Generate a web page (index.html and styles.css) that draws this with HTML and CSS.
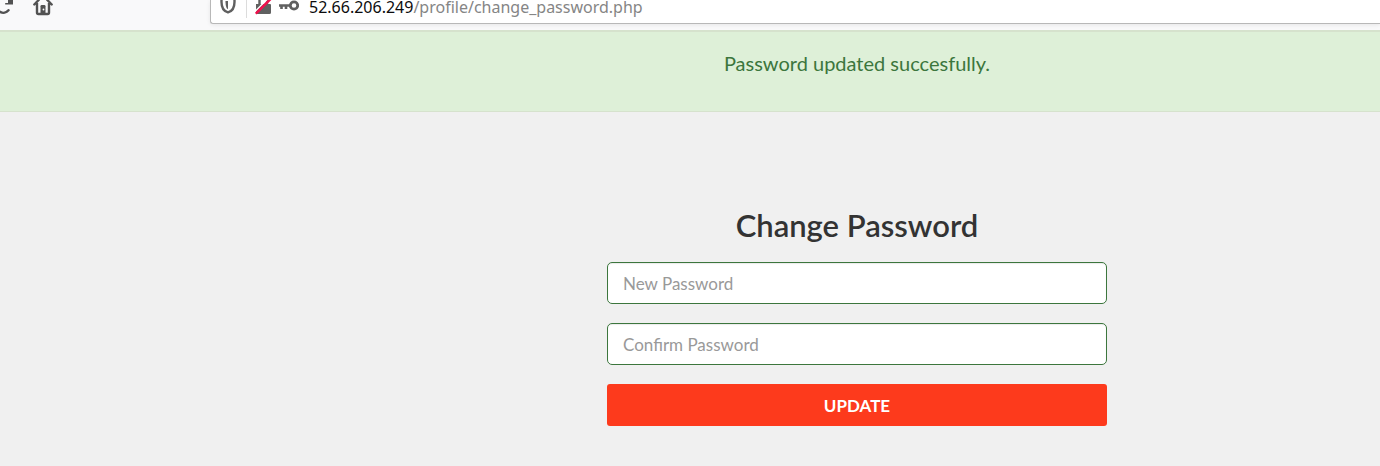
FILE: index.html
```html
<!DOCTYPE html>
<html lang="en">
<head>
<meta charset="utf-8">
<title>Change Password</title>
<link rel="stylesheet" href="styles.css">
</head>
<body>
<header class="toolbar">
  <nav class="nav-buttons">
    <button class="icon-button" type="button" aria-label="Reload">
      <svg width="14" height="16" viewBox="0 0 14 16"><path d="M0 11.8C3 13.4 6.500 12.800 8.500 10.300" fill="none" stroke="#525252" stroke-width="2.4" stroke-linecap="round"/><path d="M13 0V4.6H5.2V3H8V0Z" fill="#525252"/></svg>
    </button>
    <button class="icon-button" type="button" aria-label="Home">
      <svg width="20" height="16" viewBox="0 0 20 16"><path d="M1.3 4.5L5.7 0M18.7 4.5L14.3 0M4 3V12.6Q4 14 5.4 14H14.6Q16 14 16 12.6V3" fill="none" stroke="#525252" stroke-width="2.4" stroke-linecap="round" stroke-linejoin="round"/><path d="M7.500 14V6.200Q7.500 5 8.700 5H11.300Q12.500 5 12.500 6.200V14Z" fill="#525252"/><circle cx="10.500" cy="9.500" r=".9" fill="#f9f9fa"/></svg>
    </button>
  </nav>
  <div class="address-bar">
    <svg class="shield" width="16" height="16" viewBox="0 0 16 16"><path d="M1.500 0V2C1.500 7.500 3.800 11.300 8 12.400C12.200 11.300 14.500 7.500 14.500 2V0" fill="none" stroke="#606060" stroke-width="2.400"/><path d="M8 1V9.300C6 8.300 5.500 5 5.500 1Z" fill="#606060"/></svg>
    <div class="site-info">
      <svg width="17" height="16" viewBox="0 0 17 16"><path d="M1 4H15Q16 4 16 5V12.500Q16 14 14.500 14H2Q1 14 1 13Z" fill="#606060"/><path d="M4.500 4V0M12 4V0" stroke="#606060" stroke-width="2.400"/><path d="M-1 12.500L12.500 -1" stroke="#fff" stroke-width="1.500"/><path d="M.8 13.700L15.500 -1" stroke="#f0104c" stroke-width="2.600"/></svg>
      <svg width="20" height="16" viewBox="0 0 20 16"><circle cx="15" cy="5.500" r="3.700" fill="none" stroke="#606060" stroke-width="2.800"/><path d="M11 5.500H0M2.500 5.500V9M7 5.500V9" fill="none" stroke="#606060" stroke-width="2.600"/></svg>
    </div>
    <span class="url"><span class="host">52.66.206.249</span>/profile/change_password.php</span>
  </div>
</header>
<main class="page">
  <p class="alert" role="status">Password updated succesfully.</p>
  <form class="password-form">
    <h1 class="title">Change Password</h1>
    <input class="field" type="password" placeholder="New Password" aria-label="New Password">
    <input class="field" type="password" placeholder="Confirm Password" aria-label="Confirm Password">
    <button class="submit" type="button">UPDATE</button>
  </form>
</main>
</body>
</html>
```

FILE: styles.css
```css
* { box-sizing: border-box; }

body {
  margin: 0;
  background: #f0f0f0;
  color: #333;
  font-family: "Lato", "Liberation Sans", sans-serif;
}

svg { display: block; flex: none; }

.toolbar {
  display: flex;
  align-items: flex-start;
  height: 30px;
  background: #f9f9fa;
}

.nav-buttons {
  display: flex;
  gap: 19px;
  width: 210px;
}

.icon-button {
  padding: 0;
  border: 0;
  background: none;
}

.address-bar {
  display: flex;
  flex: 1;
  height: 24px;
  padding-left: 9px;
  border: solid #b8b8b8;
  border-width: 0 0 1px 1px;
  border-bottom-left-radius: 3px;
  background: #fff;
  box-shadow: 0 1px 4px rgba(0, 0, 0, 0.08);
}

.site-info {
  display: flex;
  gap: 7px;
  height: 18px;
  margin-left: 10px;
  padding-left: 8px;
  border-left: 1px solid #dcdcdc;
}

.url {
  margin-left: 10px;
  color: #858585;
  font: 16px/14px "Noto Sans", "Open Sans", sans-serif;
}

.host { color: #0c0c0d; }

.page {
  --offset: 334px;
}

.alert {
  min-height: 82px;
  margin: 0;
  padding: 18px 0 20px var(--offset);
  border: solid #d6e2cd;
  border-width: 2px 0 1px;
  background: #def0d8;
  color: #3c763d;
  font-size: 20px;
  line-height: 26px;
  text-align: center;
}

.password-form {
  display: flex;
  flex-direction: column;
  align-items: center;
  gap: 19px;
  padding: 96px 0 40px var(--offset);
}

.title {
  margin: 0;
  font: 600 31px/35px "Lato", sans-serif;
}

.field,
.submit {
  width: 100%;
  max-width: 500px;
  height: 42px;
  font-family: inherit;
  font-size: 17px;
}

.field {
  padding: 0 15px;
  border: 1px solid #3c763d;
  border-radius: 5px;
  background: #fff;
  box-shadow: inset 0 1px 1px rgba(0, 0, 0, 0.08);
}

.field::placeholder {
  color: #999;
  opacity: 1;
}

.submit {
  border: 0;
  border-radius: 3px;
  background: #fd3a1c;
  color: #fff;
  font-weight: 700;
}
```
